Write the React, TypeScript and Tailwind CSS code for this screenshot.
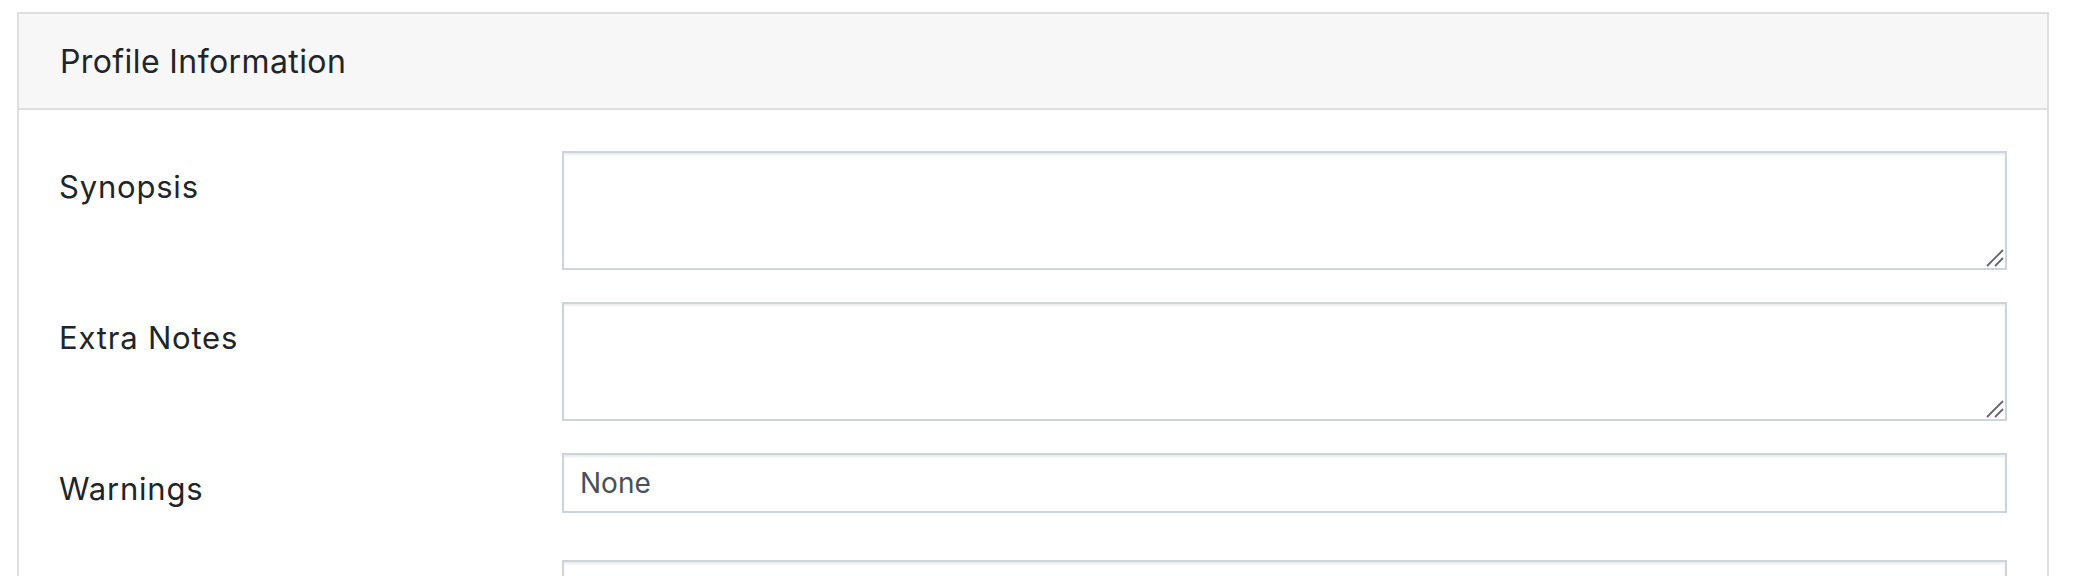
import React from "react";

const font = { fontFamily: "Inter, 'Noto Sans', sans-serif" };

function ResizeGrip() {
  return (
    <svg
      className="pointer-events-none absolute bottom-[2px] right-[2px]"
      width="20"
      height="20"
      viewBox="0 0 20 20"
    >
      <line x1="2" y1="18" x2="18" y2="2" stroke="#666666" strokeWidth="1.8" />
      <line x1="10" y1="18" x2="18" y2="10" stroke="#666666" strokeWidth="1.8" />
    </svg>
  );
}

function FieldRow({
  label,
  children,
  className = "mb-[32px]",
}: {
  label?: string;
  children: React.ReactNode;
  className?: string;
}) {
  return (
    <div className={`grid grid-cols-[503px_1fr] ${className}`}>
      <label className="pt-[17px] text-[31px] leading-[37px] tracking-[0.8px] text-[#212529]">
        {label}
      </label>
      <div>{children}</div>
    </div>
  );
}

function TextArea() {
  return (
    <div className="relative">
      <textarea className="block h-[119px] w-full resize-none border-2 border-[#ced4da] bg-white shadow-[inset_0_2px_2px_rgba(0,0,0,0.075)] outline-none" />
      <ResizeGrip />
    </div>
  );
}

export default function App() {
  return (
    <div className="min-h-screen bg-white pl-[17px] pr-[29px] pt-[12px]" style={font}>
      <div className="border-2 border-[#dfdfdf] bg-white">
        <div className="flex h-[96px] items-center border-b-2 border-[#dfdfdf] bg-[#f7f7f7] px-[41px] pt-[2px] text-[32px] tracking-[0.4px] text-[#212529]">
          Profile Information
        </div>
        <div className="px-[40px] pt-[41px]">
          <FieldRow label="Synopsis">
            <TextArea />
          </FieldRow>
          <FieldRow label="Extra Notes">
            <TextArea />
          </FieldRow>
          <FieldRow label="Warnings" className="mb-[47px]">
            <input
              readOnly
              defaultValue="None"
              className="block h-[60px] w-full border-2 border-[#ced4da] bg-white px-[16px] text-[28px] text-[#495057] shadow-[inset_0_2px_2px_rgba(0,0,0,0.075)] outline-none"
              style={font}
            />
          </FieldRow>
          <FieldRow>
            <TextArea />
          </FieldRow>
        </div>
      </div>
    </div>
  );
}
